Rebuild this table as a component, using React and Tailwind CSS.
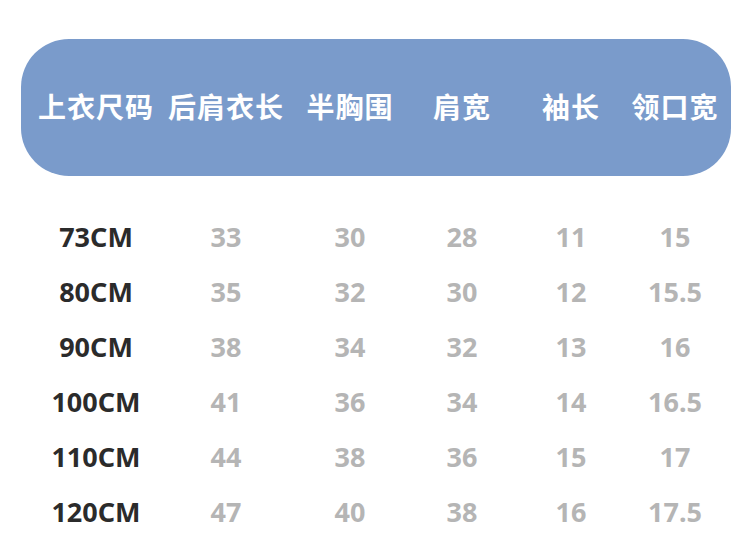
const headers = ['上衣尺码', '后肩衣长', '半胸围', '肩宽', '袖长', '领口宽']

const rows = [
  ['73CM', '33', '30', '28', '11', '15'],
  ['80CM', '35', '32', '30', '12', '15.5'],
  ['90CM', '38', '34', '32', '13', '16'],
  ['100CM', '41', '36', '34', '14', '16.5'],
  ['110CM', '44', '38', '36', '15', '17'],
  ['120CM', '47', '40', '38', '16', '17.5'],
]

const cols = 'grid grid-cols-[150px_110px_138px_86px_132px_76px]'

export default function App() {
  return (
    <div className="w-[750px] h-[552px] bg-white overflow-hidden px-[21px] pt-[39px] font-['Noto_Sans','Noto_Sans_CJK_SC',sans-serif]">
      {/* Header */}
      <div className={`${cols} h-[137px] w-[710px] items-center rounded-[48px] bg-[#7a9bcb] pb-[4px]`}>
        {headers.map((h) => (
          <div key={h} className="flex justify-center whitespace-nowrap text-[28px] font-bold tracking-[1px] text-white font-['Noto_Sans_CJK_SC',sans-serif]">
            {h}
          </div>
        ))}
      </div>

      {/* Rows */}
      <div className="mt-[33px]">
        {rows.map((r) => (
          <div key={r[0]} className={`${cols} h-[55px] items-center`}>
            {r.map((v, i) => (
              <div
                key={i}
                className={`text-center text-[27px] font-bold leading-none ${i === 0 ? 'text-[#2b2b2b]' : 'text-[#b5b5b5]'}`}
              >
                {v}
              </div>
            ))}
          </div>
        ))}
      </div>
    </div>
  )
}
